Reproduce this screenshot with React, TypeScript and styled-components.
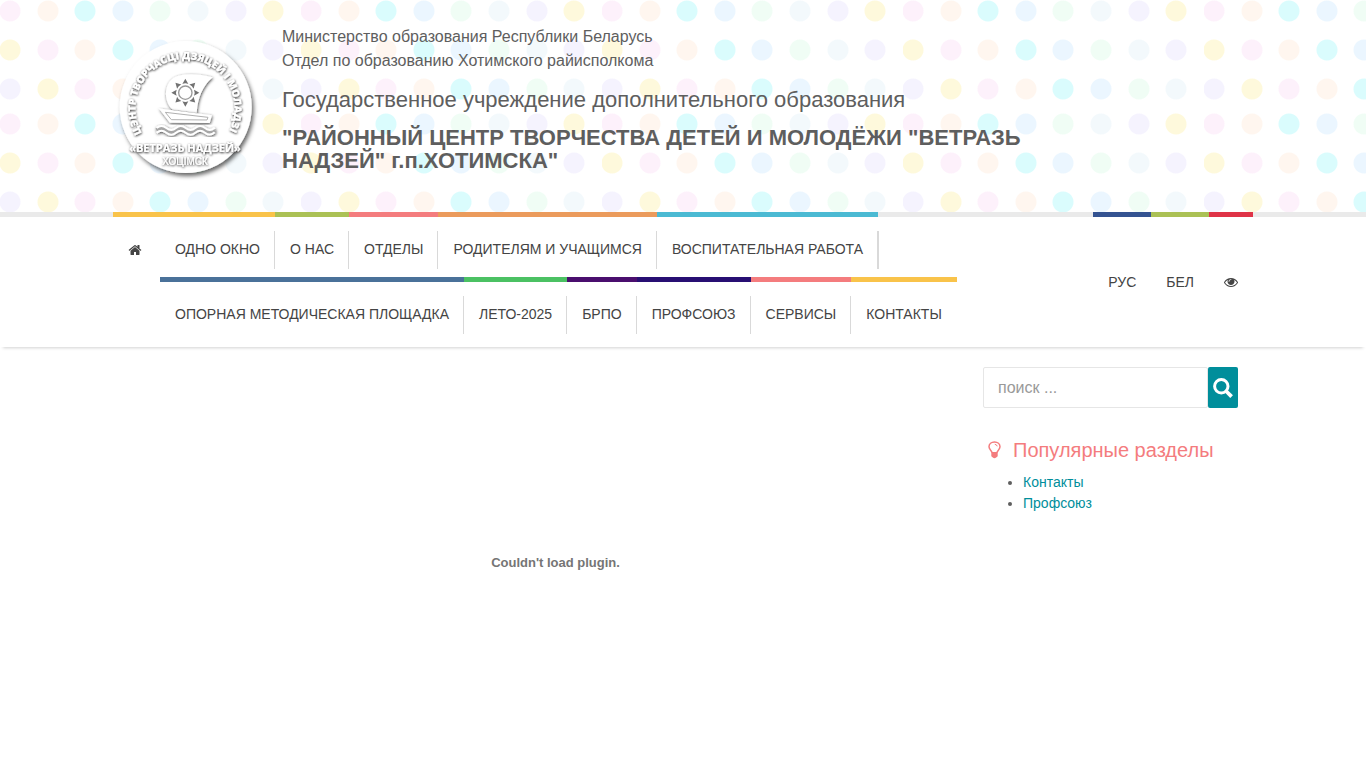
import React from "react";
import styled, { createGlobalStyle } from "styled-components";

const GlobalStyle = createGlobalStyle`
  *, *::before, *::after { box-sizing: border-box; }
  body {
    margin: 0;
    background: #fff;
    color: #5e5e5e;
    font: 14px/21px "Liberation Sans", Arial, sans-serif;
  }
  a { text-decoration: none; }
  h1, h2, p, ul { margin: 0; }
`;

const PINK = "#fdf1fb";
const PEACH = "#fff6ef";
const CYAN = "#dafcfd";
const BLUE = "#ebf6ff";
const GREEN = "#f0fdf5";
const MIST = "#f3f9fc";
const LILAC = "#f5f3fe";
const YELLOW = "#fef9dc";

/* One 301 x 113 tile of confetti dots, three rows of eight. */
const dotRows: { y: number; colors: string[] }[] = [
  { y: 11, colors: [PINK, PEACH, CYAN, BLUE, GREEN, MIST, LILAC, YELLOW] },
  { y: 50, colors: [YELLOW, PINK, PEACH, CYAN, BLUE, GREEN, MIST, LILAC] },
  { y: 89, colors: [LILAC, YELLOW, PINK, PEACH, CYAN, BLUE, GREEN, MIST] },
];

const dots = dotRows
  .flatMap(({ y, colors }) =>
    colors.map(
      (color, i) =>
        `radial-gradient(circle at ${10 + Math.round(i * 37.6)}px ${y}px, ${color} 10px, transparent 11px)`
    )
  )
  .join(", ");

const Container = styled.div`
  display: flex;
  width: 100%;
  max-width: 1140px;
  margin: 0 auto;
`;

const Banner = styled.header`
  min-height: 212px;
  background-image: ${dots};
  background-size: 301px 113px;
`;

const LogoLink = styled.a`
  flex: none;
  width: 169px;
  padding-top: 30px;
`;

const LogoSvg = styled.svg`
  display: block;
  overflow: visible;
  font-family: "Open Sans", "Noto Sans", sans-serif;
`;

const BannerText = styled.div`
  max-width: 800px;
  padding-top: 25px;
`;

const Ministry = styled.p`
  margin-bottom: 15px;
  font-size: 16px;
  line-height: 24px;
`;

const Title = styled.h1<{ $bold?: boolean }>`
  margin-bottom: 15px;
  font-size: 22px;
  line-height: 23px;
  font-weight: ${(p) => (p.$bold ? 700 : 400)};
`;

const NavBar = styled.nav`
  border-top: 5px solid #eaeaea;
  box-shadow: 0 4px 3px -3px rgba(0, 0, 0, 0.18);
`;

const NavInner = styled(Container)`
  justify-content: space-between;
  margin-top: -5px;
`;

const MainMenu = styled.div`
  display: flex;
`;

const MenuRows = styled.div``;

const MenuList = styled.ul`
  display: flex;
  padding: 0;
  list-style: none;
`;

const MenuItem = styled.li<{ $color: string }>`
  border-top: 5px solid ${(p) => p.$color};
`;

const MenuLink = styled.a<{ $divider?: boolean; $rowEnd?: boolean }>`
  display: block;
  height: 38px;
  margin: 14px 0 8px;
  padding: 0 ${(p) => (p.$divider ? 14 : 15)}px 0 15px;
  border-right: ${(p) => (p.$divider ? "1px solid #d9d9d9" : "0")};
  box-shadow: ${(p) => (p.$rowEnd ? "1px 0 0 #d9d9d9" : "none")};
  color: #444;
  line-height: 36px;
  text-transform: uppercase;
  white-space: nowrap;
`;

const HomeItem = styled.div`
  height: 65px;
  border-top: 5px solid #f9c34a;
`;

const HomeLink = styled.a`
  display: flex;
  align-items: center;
  width: 47px;
  height: 38px;
  margin-top: 14px;
  padding-left: 15px;
  color: #444;
`;

const LangLink = styled.a`
  display: flex;
  align-items: center;
  height: 130px;
  padding: 0 15px;
  color: #444;
`;

const Page = styled(Container)`
  padding-top: 20px;
`;

const Content = styled.main`
  flex: 0 0 75%;
  padding-left: 30px;
`;

const Plugin = styled.div`
  display: flex;
  align-items: center;
  justify-content: center;
  min-height: 390px;
  color: #757575;
  font-size: 13px;
  font-weight: 700;
`;

const Sidebar = styled.aside`
  flex: 0 0 25%;
  min-width: 0;
  padding: 0 15px;
`;

const SearchForm = styled.form`
  display: flex;
  height: 41px;
`;

const SearchInput = styled.input`
  flex: 1;
  min-width: 0;
  padding: 0 14px;
  border: 1px solid #e6e6e6;
  border-radius: 2px;
  background: #fff;
  color: #555;
  font: 16px "Liberation Sans", Arial, sans-serif;
  &::placeholder { color: #999; opacity: 1; }
`;

const SearchButton = styled.button`
  display: flex;
  flex: none;
  align-items: center;
  justify-content: center;
  width: 30px;
  padding: 0;
  border: 0;
  border-radius: 2px;
  background: #008e9b;
  color: #fff;
`;

const SideTitle = styled.h2`
  display: flex;
  align-items: center;
  gap: 12px;
  margin: 31px 0 11px;
  padding-left: 5px;
  color: #f47c7e;
  font-size: 20px;
  font-weight: 400;
  line-height: 22px;
`;

const SideList = styled.ul`
  padding-left: 40px;
`;

const SideLink = styled.a`
  color: #008e9b;
`;

const HomeIcon = () => (
  <svg width="14" height="14" viewBox="0 0 1792 1792" fill="currentColor" aria-hidden="true">
    <path d="M1472 992v480q0 26-19 45t-45 19h-384v-384h-256v384h-384q-26 0-45-19t-19-45v-480q0-1 .5-3t.5-3l575-474 575 474q1 2 1 6zm223-69l-62 74q-8 9-21 11h-3q-13 0-21-7l-692-577-692 577q-12 8-24 7-13-2-21-11l-62-74q-8-10-7-23.5t11-21.5l719-599q32-26 76-26t76 26l244 204v-195q0-14 9-23t23-9h192q14 0 23 9t9 23v408l219 182q10 8 11 21.5t-7 23.5z" />
  </svg>
);

const EyeIcon = () => (
  <svg width="14" height="14" viewBox="0 0 1792 1792" fill="currentColor" aria-hidden="true">
    <path d="M1664 960q-152-236-381-353 61 104 61 225 0 185-131.5 316.5t-316.5 131.5-316.5-131.5-131.5-316.5q0-121 61-225-229 117-381 353 133 205 333.5 326.5t434.5 121.5 434.5-121.5 333.5-326.5zm-720-384q0-20-14-34t-34-14q-125 0-214.5 89.5t-89.5 214.5q0 20 14 34t34 14 34-14 14-34q0-86 61-147t147-61q20 0 34-14t14-34zm848 384q0 34-20 69-140 230-376.5 368.5t-499.5 138.5-499.5-139-376.5-368q-20-35-20-69t20-69q140-229 376.5-368t499.5-139 499.5 139 376.5 368q20 35 20 69z" />
  </svg>
);

const SearchIcon = () => (
  <svg width="20" height="20" viewBox="0 0 20 20" fill="none" stroke="currentColor" aria-hidden="true">
    <circle cx="8.3" cy="8.3" r="6.7" strokeWidth="3" />
    <path d="M13 13l5.6 5.6" strokeWidth="3.8" />
  </svg>
);

const BulbIcon = () => (
  <svg width="13" height="18" viewBox="0 0 13 18" aria-hidden="true">
    <path
      d="M4 11.6C3.8 9.4 1 8.6 1 5.8C1 3 3.4 1 6.5 1S12 3 12 5.8C12 8.6 9.2 9.4 9 11.6"
      fill="none"
      stroke="currentColor"
      strokeWidth="1.5"
    />
    <path d="M6.8 3.3q2 .2 2.4 2" fill="none" stroke="currentColor" strokeWidth="1" />
    <path d="M3.3 11h6.4v4.2l-1.5 1.4q-1.7 1.5-3.4 0l-1.5-1.4z" fill="currentColor" />
  </svg>
);

const rays = [0, 45, 90, 135, 180, 225, 270, 315];

const Logo = () => (
  <LogoSvg width="155" height="160" viewBox="3 0 155 160" role="img" aria-label="Ветразь надзей">
    <defs>
      <filter id="disc" x="-20%" y="-20%" width="150%" height="150%">
        <feDropShadow dx="2" dy="3" stdDeviation="2" floodColor="#000" floodOpacity="0.6" />
      </filter>
      <filter id="relief" x="-20%" y="-20%" width="140%" height="140%">
        <feDropShadow dx="0.4" dy="0.8" stdDeviation="1.3" floodColor="#000" floodOpacity="1" />
      </filter>
      <filter id="softRelief" x="-20%" y="-20%" width="140%" height="140%">
        <feDropShadow dx="2" dy="3" stdDeviation="4" floodColor="#000" floodOpacity="0.75" />
      </filter>
      <path id="arc" d="M32 103A49.5 49.5 0 1 1 114 109" />
    </defs>
    <circle cx="75.7" cy="77" r="66" fill="#fff" filter="url(#disc)" />
    <g fill="#fff" filter="url(#relief)">
      <text fontSize="10" fontWeight="800">
        <textPath href="#arc">ЦЭНТР ТВОРЧАСЦІ ДЗЯЦЕЙ І МОЛАДЗІ</textPath>
      </text>
      <text x="75" y="122" fontSize="11" fontWeight="700" textAnchor="middle">«ВЕТРАЗЬ НАДЗЕЙ»</text>
      <text x="75" y="135" fontSize="10" fontFamily="Liberation Sans, sans-serif" textAnchor="middle">ХОЦІМСК</text>
    </g>
    <g transform="scale(.33333)">
      <g filter="url(#softRelief)">
        <path d="M188 239C158 212 160 150 205 137Q250 127 308 142Q264 180 260 249Z" fill="#fff" />
      </g>
      <g filter="url(#softRelief)">
        <path d="M153 239L302 258L297 276L181 275Z" fill="#fff" stroke="#fff" strokeWidth="6" />
      </g>
      <path d="M166 247L294 262L291 270L184 269Z" fill="#fff" stroke="#b0b0b0" strokeWidth="3" />
      <g fill="#727272">
        {rays.map((a) => (
          <path key={a} d="M217 162L226 146L235 162Q226 158 217 162Z" transform={`rotate(${a} 226 188)`} />
        ))}
      </g>
      <circle cx="226" cy="188" r="20" fill="#fff" stroke="#999" strokeWidth="4" />
      <g fill="none" filter="url(#softRelief)">
        <path d="M140 301q14-12 29 0t29 0t29 0t29 0t29 0t29-1" stroke="#a6a6a6" strokeWidth="13" />
        <path
          d="M140 294q14-12 29 0t29 0t29 0t29 0t29 0t29-1M140 308q14-12 29 0t29 0t29 0t29 0t29 0t29-1"
          stroke="#fff"
          strokeWidth="6"
        />
      </g>
    </g>
  </LogoSvg>
);

const topMenu = [
  { label: "Одно окно", color: "#f9c34a" },
  { label: "О нас", color: "#abc155" },
  { label: "Отделы", color: "#f47c7e" },
  { label: "Родителям и учащимся", color: "#eb9b5c" },
  { label: "Воспитательная работа", color: "#4bbad3" },
];

const lowerMenu = [
  { label: "Опорная методическая площадка", color: "#4a7199" },
  { label: "Лето-2025", color: "#4bc163" },
  { label: "БРПО", color: "#4a0e6e" },
  { label: "Профсоюз", color: "#280f73" },
  { label: "Сервисы", color: "#f47c7e" },
  { label: "Контакты", color: "#f9c34a" },
];

export default function App() {
  return (
    <>
      <GlobalStyle />
      <Banner>
        <Container>
          <LogoLink href="#">
            <Logo />
          </LogoLink>
          <BannerText>
            <Ministry>
              Министерство образования Республики Беларусь
              <br />
              Отдел по образованию Хотимского райисполкома
            </Ministry>
            <Title>Государственное учреждение дополнительного образования</Title>
            <Title $bold>"РАЙОННЫЙ ЦЕНТР ТВОРЧЕСТВА ДЕТЕЙ И МОЛОДЁЖИ "ВЕТРАЗЬ НАДЗЕЙ" г.п.ХОТИМСКА"</Title>
          </BannerText>
        </Container>
      </Banner>
      <NavBar>
        <NavInner>
          <MainMenu>
            <HomeItem>
              <HomeLink href="#" aria-label="Главная">
                <HomeIcon />
              </HomeLink>
            </HomeItem>
            <MenuRows>
              <MenuList>
                {topMenu.map((item, i) => (
                  <MenuItem key={item.label} $color={item.color}>
                    <MenuLink href="#" $divider $rowEnd={i === topMenu.length - 1}>{item.label}</MenuLink>
                  </MenuItem>
                ))}
              </MenuList>
              <MenuList>
                {lowerMenu.map((item, i) => (
                  <MenuItem key={item.label} $color={item.color}>
                    <MenuLink href="#" $divider={i < lowerMenu.length - 1}>{item.label}</MenuLink>
                  </MenuItem>
                ))}
              </MenuList>
            </MenuRows>
          </MainMenu>
          <MenuList>
            <MenuItem $color="#345391">
              <LangLink href="#">РУС</LangLink>
            </MenuItem>
            <MenuItem $color="#abc155">
              <LangLink href="#">БЕЛ</LangLink>
            </MenuItem>
            <MenuItem $color="#df3347">
              <LangLink href="#" aria-label="Версия для слабовидящих">
                <EyeIcon />
              </LangLink>
            </MenuItem>
          </MenuList>
        </NavInner>
      </NavBar>
      <Page>
        <Content>
          <Plugin>Couldn't load plugin.</Plugin>
        </Content>
        <Sidebar>
          <SearchForm role="search">
            <SearchInput type="search" placeholder="поиск ..." aria-label="Поиск" />
            <SearchButton type="button" aria-label="Найти">
              <SearchIcon />
            </SearchButton>
          </SearchForm>
          <SideTitle>
            <BulbIcon />
            Популярные разделы
          </SideTitle>
          <SideList>
            <li><SideLink href="#">Контакты</SideLink></li>
            <li><SideLink href="#">Профсоюз</SideLink></li>
          </SideList>
        </Sidebar>
      </Page>
    </>
  );
}
